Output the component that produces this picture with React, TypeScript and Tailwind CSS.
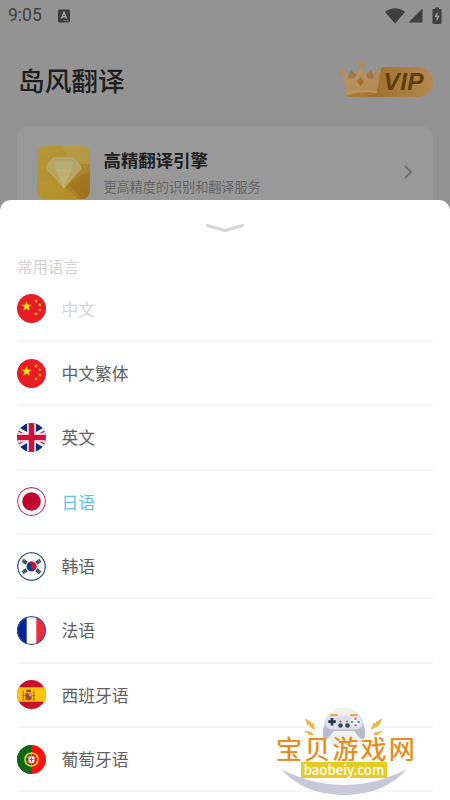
import type { ReactNode } from "react";

/* ─── Languages ───────────────────────────────────────────── */
type Language = {
  name: string;
  flag: () => ReactNode;
  state?: "muted" | "active";
};

const LANGUAGES: Language[] = [
  { name: "中文", flag: ChinaFlag, state: "muted" },
  { name: "中文繁体", flag: ChinaFlag },
  { name: "英文", flag: UkFlag },
  { name: "日语", flag: JapanFlag, state: "active" },
  { name: "韩语", flag: KoreaFlag },
  { name: "法语", flag: FranceFlag },
  { name: "西班牙语", flag: SpainFlag },
  { name: "葡萄牙语", flag: PortugalFlag },
];

const STAR = "M0-1 .225-.309H.951L.363.118.588.809 0 .382-.588.809-.363.118-.951-.309H-.225Z";

/* ─── Round flags, all drawn on a 30×30 box ───────────────── */
function ChinaFlag() {
  return (
    <>
      <rect width="30" height="30" fill="#e81c24" />
      <path d={STAR} fill="#ffe800" transform="translate(9.8 12.8) scale(5.6)" />
      <path d={STAR} fill="#ffd21a" transform="translate(19.6 7.2) rotate(20) scale(2.1)" />
      <path d={STAR} fill="#ffd21a" transform="translate(23.6 11) rotate(-10) scale(2.1)" />
      <path d={STAR} fill="#ffd21a" transform="translate(23.6 16.6) scale(2.1)" />
      <path d={STAR} fill="#ffd21a" transform="translate(19.6 20.6) rotate(20) scale(2.1)" />
    </>
  );
}

function UkFlag() {
  return (
    <>
      <rect width="30" height="30" fill="#0a2a7a" />
      <path d="M-4 4 34 26M34 4-4 26" stroke="#fff" strokeWidth="5" />
      <path d="M-4 5.2 15 16M34 5.2 15 16M-4 25 15 14M34 25 15 14" stroke="#d0103a" strokeWidth="1.4" />
      <path d="M15 0V30M0 15H30" stroke="#fff" strokeWidth="9" />
      <path d="M15 0V30M0 15H30" stroke="#d0103a" strokeWidth="5.8" />
    </>
  );
}

function JapanFlag() {
  return (
    <>
      <rect width="30" height="30" fill="#fff" />
      <circle cx="15" cy="15" r="9.6" fill="#c0042e" />
      <circle cx="15" cy="15" r="14.4" fill="none" stroke="#b83a56" strokeWidth="1.2" />
    </>
  );
}

function KoreaFlag() {
  return (
    <>
      <rect width="30" height="30" fill="#fff" />
      <g transform="rotate(25 15 15)">
        <circle cx="15" cy="15" r="5.2" fill="#0e3f8c" />
        <path d="M9.8 15a5.2 5.2 0 0 1 10.4 0 2.6 2.6 0 0 1-5.2 0 2.6 2.6 0 0 0-5.2 0Z" fill="#cc1030" />
      </g>
      <g stroke="#3c3c3c" strokeWidth="1.5">
        <path d="M5.3 10.5 7.7 7.4M6.7 11.6 9.1 8.5M8.1 12.7 10.5 9.6" />
        <path d="M24.7 10.5 22.3 7.4M23.3 11.6 20.9 8.5M21.9 12.7 19.5 9.6" />
        <path d="M5.3 19.5 7.7 22.6M6.7 18.4 9.1 21.5M8.1 17.3 10.5 20.4" />
        <path d="M24.7 19.5 22.3 22.6M23.3 18.4 20.9 21.5M21.9 17.3 19.5 20.4" />
      </g>
      <circle cx="15" cy="15" r="14.3" fill="none" stroke="#2d5592" strokeWidth="1.4" />
    </>
  );
}

function FranceFlag() {
  return (
    <>
      <rect width="30" height="30" fill="#fff" />
      <rect width="10" height="30" fill="#06209a" />
      <rect x="20" width="10" height="30" fill="#f02b3c" />
      <circle cx="15" cy="15" r="14.4" fill="none" stroke="#34509a" strokeWidth="1.2" />
    </>
  );
}

function SpainFlag() {
  return (
    <>
      <rect width="30" height="30" fill="#c8102a" />
      <rect y="7.5" width="30" height="15" fill="#ffc40a" />
      <path d="M6.6 11.5V20M17.4 11.5V20" stroke="#9a6a4a" strokeWidth="1.2" />
      <path d="M8.6 13.4H15.4V18Q15.4 21 12 21 8.6 21 8.6 18Z" fill="#b24528" />
      <path d="M12 13.4H15.4V17H12Z" fill="#c99b90" />
      <path d="M9.2 12.6 9.6 10.3 12 9.6 14.4 10.3 14.8 12.6Z" fill="#a5532a" />
      <path d="M5.5 20.5H8M16 20.5H18.5M5.5 16.2H8M16 16.2H18.5" stroke="#8f4c3c" />
      <circle cx="12" cy="17" r="1.2" fill="#5b4a7a" />
    </>
  );
}

function PortugalFlag() {
  return (
    <>
      <rect width="30" height="30" fill="#fa1010" />
      <rect width="15" height="30" fill="#0a6a12" />
      <circle cx="15" cy="15" r="6.8" fill="none" stroke="#e6d020" strokeWidth="1.6" />
      <path d="M8.5 12 21.5 18M8.5 18 21.5 12M15 8V22" stroke="#d9c820" strokeWidth=".9" />
      <path d="M11 10.8H19V16.5Q19 20 15 20 11 20 11 16.5Z" fill="#e02020" />
      <path d="M12 11.8H18V16.3Q18 18.8 15 18.8 12 18.8 12 16.3Z" fill="#fff" />
      <path d="M15 12.7V17.7M12.9 15H17.1" stroke="#5a74b8" strokeWidth="1" />
    </>
  );
}

/* ─── Status bar ──────────────────────────────────────────── */
function StatusBar() {
  return (
    <div className="flex h-[31px] items-center px-2 text-[#3f3f3f]">
      <span className="mt-px font-[Roboto] text-[17.5px] leading-none">9:05</span>
      <svg className="ml-4" width="12" height="14" viewBox="0 0 12 14">
        <rect y=".5" width="12" height="13" rx="1.5" fill="#3d3d3d" />
        <path d="M3.3 9.5 6 3.5 8.7 9.5M4.2 7.7H7.8" fill="none" stroke="#a8a8a8" strokeWidth="1.5" />
        <path d="M6 11.7H10.5" stroke="#888" strokeWidth=".8" />
      </svg>
      <svg className="ml-auto" width="20" height="16" viewBox="0 0 20 16" fill="#3f3f3f">
        <path d="M0 4Q10-3.5 20 4L10 15.5Z" />
      </svg>
      <svg className="ml-[3px]" width="15" height="15" viewBox="0 0 15 15" fill="#3f3f3f">
        <path d="M14.5.5V14.5H.5Z" />
      </svg>
      <svg className="ml-[9px]" width="10" height="18" viewBox="0 0 10 18">
        <path d="M3 .5H7V2H8.5Q9.5 2 9.5 3V16Q9.5 17 8.5 17H1.5Q.5 17 .5 16V3Q.5 2 1.5 2H3Z" fill="#3f3f3f" />
        <path d="M5.5 4.5 2.4 10H4.6V14.5L7.7 8.8H5.5Z" fill="#a0a0a0" />
      </svg>
    </div>
  );
}

/* ─── VIP badge ───────────────────────────────────────────── */
function VipBadge() {
  return (
    <div className="relative -mt-1 h-[37px] w-[95px]">
      <svg className="absolute inset-0" width="95" height="37" viewBox="0 0 95 37">
        <defs>
          <linearGradient id="pill">
            <stop offset="0" stopColor="#b08044" />
            <stop offset=".35" stopColor="#a1712f" />
            <stop offset="1" stopColor="#b38852" />
          </linearGradient>
          <linearGradient id="crown" x2="1" y2="1">
            <stop offset="0" stopColor="#bb9765" />
            <stop offset="1" stopColor="#b3884f" />
          </linearGradient>
        </defs>
        <path d="M43 6H79A15 15 0 0 1 79 36H9Q7 36 7 33V29L34 27Z" fill="url(#pill)" />
        <path d="M8 18 12 9 21 17M24 17 32 9 36 18" fill="#a5773c" />
        <path d="M4 12.5 14 20 22 5 30 20 41 12 38 31Q23 28 7 32Z" fill="url(#crown)" />
        <circle cx="3.5" cy="11.5" r="2.9" fill="#b68b55" />
        <circle cx="21.5" cy="4" r="3.2" fill="#b68b55" />
        <circle cx="39" cy="11.5" r="2.9" fill="#b68b55" />
        <path d="M7 31Q23 28 38 30.5V32Q22 30 7 34Z" fill="#bb9766" />
        <path d="M21.5 16 25 20.5 21.5 25 18 20.5Z" fill="#a06f2e" />
      </svg>
      <span className="absolute top-2 left-[44.5px] font-['Liberation_Sans'] text-[24.5px] leading-[26px] font-bold tracking-[0.3px] text-[#5f3d08] italic">
        VIP
      </span>
    </div>
  );
}

/* ─── Dimmed home screen behind the sheet ─────────────────── */
function EngineCard() {
  return (
    <div className="mx-[17px] mt-[25px] flex h-[110px] items-start rounded-[12px] bg-[#999999] pt-5 pl-5">
      <svg width="53" height="53" viewBox="0 0 53 53">
        <defs>
          <linearGradient id="tile" x2="1" y2="1">
            <stop offset="0" stopColor="#b49a3c" />
            <stop offset=".5" stopColor="#b08f32" />
            <stop offset="1" stopColor="#a07420" />
          </linearGradient>
          <linearGradient id="gem" x2="0" y2="1">
            <stop offset="0" stopColor="#b3a46c" />
            <stop offset="1" stopColor="#baa75a" />
          </linearGradient>
          <clipPath id="tileClip">
            <rect width="53" height="53" rx="8" />
          </clipPath>
        </defs>
        <g clipPath="url(#tileClip)">
          <rect width="53" height="53" fill="url(#tile)" />
          <circle cx="50" cy="-8" r="26" fill="#b99f52" opacity=".6" />
          <circle cx="14" cy="66" r="32" fill="#b8942a" opacity=".8" />
          <path d="M28 42Q42 28 53 25V53H40Q36 46 28 42Z" fill="#9a681b" opacity=".4" />
        </g>
        <path d="M17.5 11H35.5Q37 11 38 12.5L44 20Q45 21.5 44 23L27 42.5 9 23Q8 21.5 9 20L15 12.5Q16 11 17.5 11Z" fill="url(#gem)" />
        <path d="M17 15.5H36L34.5 23H18.5Z" fill="#bcb184" opacity=".6" />
        <path d="M9 21.5 17 15.5 18.5 23 27 42.5Z" fill="#b9a655" opacity=".6" />
        <path d="M18.5 23H34.5L27 42.5Z" fill="#c2b67c" opacity=".7" />
      </svg>
      <div className="ml-[13.5px] flex flex-col">
        <span className="mt-px text-[17.4px] leading-[25px] font-bold text-[#1e1e1e]">高精翻译引擎</span>
        <span className="mt-[5px] text-[13.1px] leading-5 text-[#646464]">更高精度的识别和翻译服务</span>
      </div>
      <svg className="mt-[19px] mr-5 ml-auto" width="9" height="14" viewBox="0 0 9 14">
        <path d="M1.5 1.5 7 7 1.5 12.5" fill="none" stroke="#707072" strokeWidth="2" strokeLinecap="round" />
      </svg>
    </div>
  );
}

function HomeScreen() {
  return (
    <div className="h-[200px]">
      <StatusBar />
      <div className="mt-[30px] flex h-[40px] items-center justify-between pr-4 pl-[18px]">
        <h1 className="-mt-[3px] text-[26.7px] leading-10 font-medium text-[#1e1e1e]">岛风翻译</h1>
        <VipBadge />
      </div>
      <EngineCard />
    </div>
  );
}

/* ─── Language sheet ──────────────────────────────────────── */
function LanguageRow({ language }: { language: Language }) {
  const Flag = language.flag;
  const color = {
    default: "text-[#606060]",
    muted: "text-[#d6d6d6]",
    active: "text-[#63c0e8]",
  }[language.state ?? "default"];
  return (
    <li className="flex h-[64.35px] items-center border-b-2 border-[#f5f5f5]">
      <svg className="size-[29px] shrink-0 rounded-full" viewBox="0 0 30 30">
        <Flag />
      </svg>
      <span className={`ml-[15.5px] text-[16.8px] leading-6 ${color}`}>{language.name}</span>
    </li>
  );
}

function LanguageSheet() {
  return (
    <section className="h-[600px] overflow-hidden rounded-t-[11px] bg-white px-[17px] pt-[23px]">
      <svg className="mx-auto" width="40" height="10" viewBox="0 0 40 10">
        <path d="M2.5 2.5 20 7.5 37.5 2.5" fill="none" stroke="#d5d7d7" strokeWidth="3.2" strokeLinecap="round" strokeLinejoin="round" />
      </svg>
      <h2 className="mt-[21px] text-[15.5px] leading-6 text-[#d2d2d2]">常用语言</h2>
      <ul className="-mt-[0.5px]">
        {LANGUAGES.map((language) => (
          <LanguageRow key={language.name} language={language} />
        ))}
      </ul>
    </section>
  );
}

/* ─── Site stamp over the bottom-right corner ─────────────── */
function SiteStamp() {
  return (
    <div className="absolute top-[704px] left-[272px] h-[96px] w-[144px]">
      <svg className="absolute inset-0" width="144" height="96" viewBox="0 0 144 96">
        <circle cx="72" cy="24" r="20.5" fill="#f0f0f0" />
        <path d="M9 65Q72 97 135 65Q112 91 72 91Q32 91 9 65Z" fill="#c8c9d8" />
        <path d="M59 11H65M79 11H85" stroke="#e4b24a" strokeWidth="2.2" strokeLinecap="round" />
        <path d="M60 12H84Q90 12 91 19Q94 28 93 33Q91 37 87 33L82 27H62L57 33Q53 37 51 33Q50 28 53 19Q54 12 60 12Z" fill="#b9bbcd" />
        <path d="M59 12H85Q91 13 91 18 91 25 84 25.5H60Q53 25 53 18 53 13 59 12Z" fill="#dfe0ec" />
        <path d="M60 14V21.5M56.3 17.7H63.8" stroke="#24384a" strokeWidth="2.7" />
        <circle cx="83.5" cy="18" r="5" fill="#f7f7fb" />
        <circle cx="83.5" cy="14.7" r="1.2" fill="#e75162" />
        <circle cx="83.5" cy="21.3" r="1.2" fill="#e75162" />
        <circle cx="80.2" cy="18" r="1.2" fill="#3bafc9" />
        <circle cx="86.8" cy="18" r="1.2" fill="#3b91c9" />
        <circle cx="68.5" cy="17.5" r="1" fill="#e44a5d" />
        <circle cx="75" cy="17.5" r="1" fill="#e44a5d" />
        <circle cx="68.5" cy="21.5" r="2.3" fill="#32485c" />
        <circle cx="75.5" cy="21.5" r="2.3" fill="#32485c" />
        <g fill="#f5bd35" stroke="#d9932a" strokeWidth=".5">
          <path d="M33.5 15 39 18.500 38.500 20 41 19.500 42.500 25.500 37.500 22 38 20.500 35.500 20.500Z" />
          <path d="M109.500 15 104 18.500 104.500 20 101.500 19.500 99.500 25 106 22 105.500 20.500 107.500 20.500Z" />
          <path d="M33 27.500 37.500 28V29L40 28.500 41 31 36.500 30.500V29.500Z" />
          <path d="M110 27.500 105.500 28V29L103 28.500 102 31 106.500 30.500V29.500Z" />
        </g>
      </svg>
      <span className="absolute top-[31px] left-[4px] text-[26px] leading-[25px] tracking-[2.2px] whitespace-nowrap text-[#e68a1c] [text-shadow:0_0_1px_#f1b35f]">
        宝贝游戏网
      </span>
      <span className="absolute top-[58px] left-[29px] flex h-4 w-[86px] items-center justify-center bg-[#e6cb22] pb-px font-['Noto_Sans_CJK_SC'] text-[13.2px] leading-none font-medium text-white">
        baobeiy.com
      </span>
    </div>
  );
}

export default function App() {
  return (
    <main className="relative h-[800px] w-[450px] overflow-hidden bg-[#939393] font-['Noto_Sans_CJK_SC',sans-serif]">
      <HomeScreen />
      <LanguageSheet />
      <SiteStamp />
    </main>
  );
}
